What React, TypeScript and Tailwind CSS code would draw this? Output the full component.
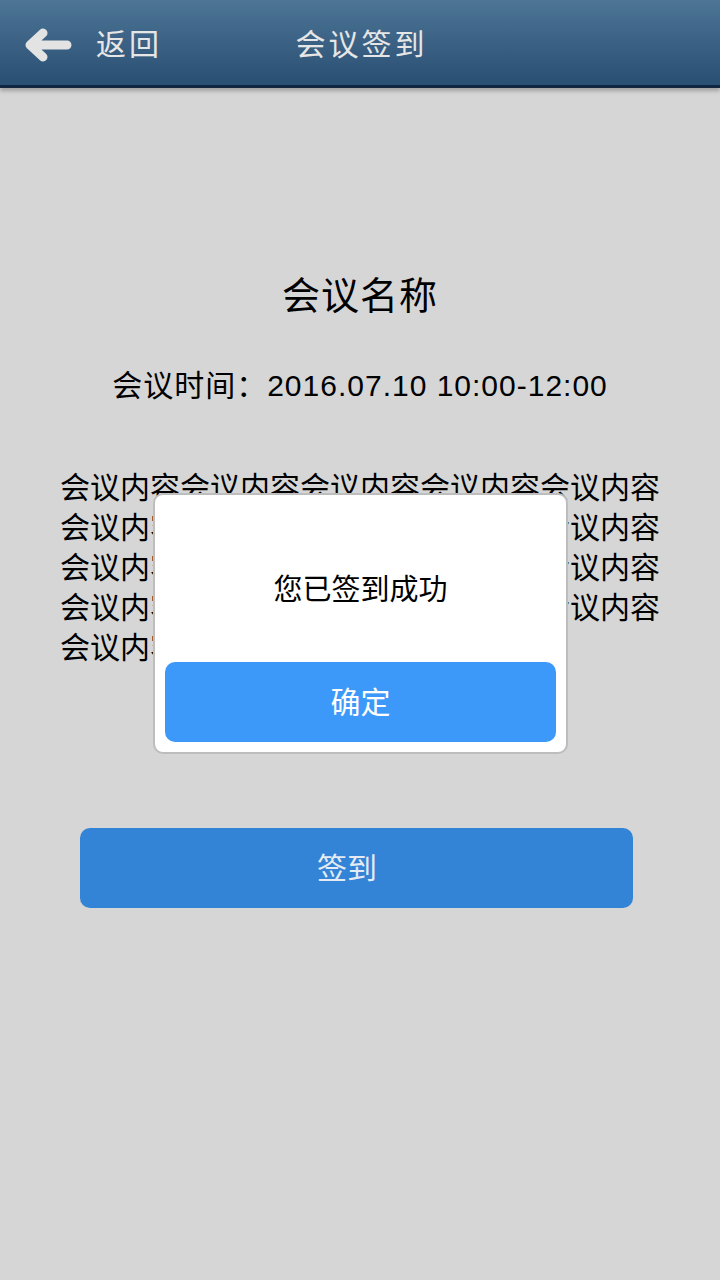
import React from "react";

const font = { fontFamily: '"Liberation Sans", "Noto Sans CJK SC", sans-serif' };

export default function App() {
  const content = "会议内容".repeat(22);

  return (
    <div style={font} className="relative w-[720px] h-[1280px] bg-[#d6d6d6] overflow-hidden">
      {/* header */}
      <div className="h-[88px] flex items-center pt-[4px] bg-gradient-to-b from-[#4d7596] to-[#294f72] border-b-[3px] border-[#10273f] shadow-[0_3px_4px_rgba(0,0,0,0.25)] relative">
        <div className="flex items-center pl-[24px] gap-[24px]">
          <svg width="48" height="36" viewBox="0 0 48 36">
            <path
              d="M43 18H8M19 6L6 18L19 30"
              fill="none"
              stroke="#e3e3e3"
              strokeWidth="9"
              strokeLinecap="round"
              strokeLinejoin="round"
            />
          </svg>
          <span className="text-[30px] text-[#e6e6e6] tracking-[3px] leading-none">返回</span>
        </div>
        <div className="absolute inset-0 pt-[4px] flex items-center justify-center pointer-events-none">
          <span className="text-[30px] text-[#e6e6e6] tracking-[3px] leading-none pl-[3px]">会议签到</span>
        </div>
      </div>

      {/* body */}
      <div className="flex flex-col items-center">
        <h1 className="mt-[183px] text-[38px] leading-[50px] text-black tracking-[1px]">会议名称</h1>
        <p className="mt-[45px] text-[30px] leading-[40px] text-black tracking-[1px]">会议时间：2016.07.10 10:00-12:00</p>
        <p className="mt-[62px] w-[600px] text-[30px] leading-[40px] text-black break-all">{content}</p>
        <button className="mt-[160px] mr-[8px] w-[553px] h-[80px] rounded-[10px] bg-[#3383d6] text-[30px] text-[#e4ebf3] pr-[18px]">
          签到
        </button>
      </div>

      {/* dialog */}
      <div className="absolute left-[153px] top-[493px] w-[415px] h-[261px] bg-white rounded-[10px] border-2 border-[#bdbdbd] flex flex-col items-center px-[10px] pb-[10px]">
        <div className="flex-1 flex items-center justify-center text-[29px] text-black pt-[24px]">
          您已签到成功
        </div>
        <button className="w-full h-[80px] rounded-[10px] bg-[#3d99f9] text-[30px] text-white">
          确定
        </button>
      </div>
    </div>
  );
}
